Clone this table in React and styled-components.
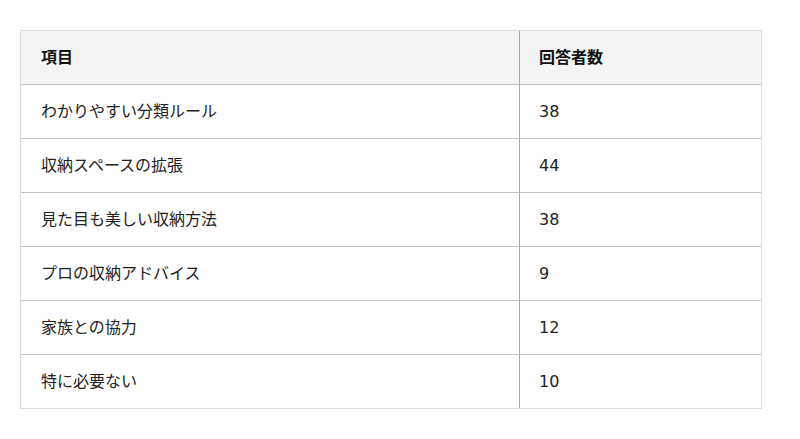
import React from "react";
import styled, { createGlobalStyle } from "styled-components";

const Global = createGlobalStyle`
  html, body { margin: 0; padding: 0; background: #fff; }
  body { font-family: "DejaVu Sans", "Noto Sans CJK JP", sans-serif; }
`;

const Wrap = styled.div`
  padding: 30px 38px 30px 20px;
`;

const Table = styled.table`
  width: 742px;
  border-collapse: separate;
  border-spacing: 0;
  border: 1px solid #dcdcdc;
  font-size: 16px;
  color: #222;
`;

const Th = styled.th`
  background: #f4f4f4;
  text-align: left;
  font-weight: bold;
  height: 54px;
  box-sizing: border-box;
  padding: 0 20px 0 ${(p) => (p.$first ? "20px" : "19px")};
  line-height: 21px;
  border-bottom: 1px solid #c2c2c2;
  border-right: ${(p) => (p.$first ? "1px solid #a8a8a8" : "none")};
  width: ${(p) => (p.$first ? "499px" : "auto")};
  color: #111;
`;

const Td = styled.td`
  height: ${(p) => (p.$last ? "53px" : "54px")};
  box-sizing: border-box;
  padding: 0 20px 0 ${(p) => (p.$first ? "20px" : "19px")};
  line-height: 21px;
  border-bottom: ${(p) => (p.$last ? "none" : "1px solid #c2c2c2")};
  border-right: ${(p) => (p.$first ? "1px solid #a8a8a8" : "none")};
  color: #222;
`;

const rows = [
  ["わかりやすい分類ルール", "38"],
  ["収納スペースの拡張", "44"],
  ["見た目も美しい収納方法", "38"],
  ["プロの収納アドバイス", "9"],
  ["家族との協力", "12"],
  ["特に必要ない", "10"],
];

export default function App() {
  return (
    <Wrap>
      <Global />
      <Table>
        <thead>
          <tr>
            <Th $first>項目</Th>
            <Th>回答者数</Th>
          </tr>
        </thead>
        <tbody>
          {rows.map(([a, b], i) => (
            <tr key={i}>
              <Td $first $last={i === rows.length - 1}>{a}</Td>
              <Td $last={i === rows.length - 1}>{b}</Td>
            </tr>
          ))}
        </tbody>
      </Table>
    </Wrap>
  );
}
